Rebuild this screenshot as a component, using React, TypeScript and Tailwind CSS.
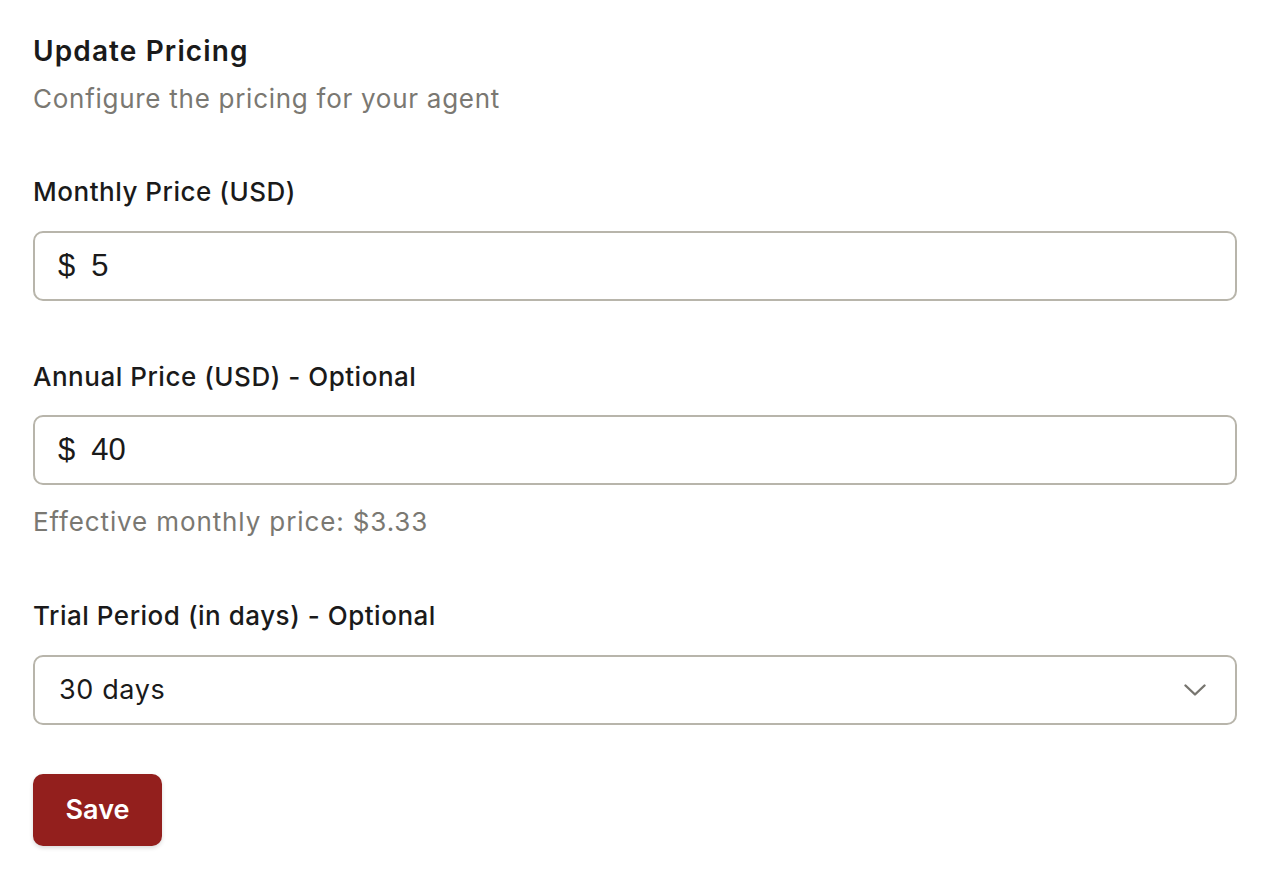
import React from "react";

const font = { fontFamily: "Inter, 'Noto Sans', sans-serif" };

function Chevron() {
  return (
    <svg width="22" height="12" viewBox="0 0 22 12" fill="none" stroke="#77756f" strokeWidth="2.4" strokeLinecap="round" strokeLinejoin="round">
      <path d="M1.5 1.5l9.5 9 9.5-9" />
    </svg>
  );
}

function PriceInput({ value }: { value: string }) {
  return (
    <div className="flex h-[70px] items-center rounded-[10px] border-2 border-[#b8b5ab] bg-white pl-[23px] font-['Liberation_Sans',Arial,sans-serif] text-[31px] text-[#1a1a1a]">
      <span>$</span>
      <span className="ml-[16px]">{value}</span>
    </div>
  );
}

export default function App() {
  return (
    <div className="min-h-[880px] bg-white pl-[33px] pr-[35px] pt-[33px] text-[#1a1a1a]" style={font}>
      <h1 className="text-[28px] font-semibold leading-[36px] tracking-[0.04em]">Update Pricing</h1>
      <p className="mt-[14px] text-[26px] leading-[32px] tracking-[0.028em] text-[#7a7872]">Configure the pricing for your agent</p>

      <div className="mt-[61px]">
        <label className="block text-[26px] font-medium leading-[32px] tracking-[0.02em]">Monthly Price (USD)</label>
        <div className="mt-[23px]">
          <PriceInput value="5" />
        </div>
      </div>

      <div className="mt-[60px]">
        <label className="block text-[26px] font-medium leading-[32px] tracking-[0.02em]">Annual Price (USD) - Optional</label>
        <div className="mt-[22px]">
          <PriceInput value="40" />
        </div>
        <p className="mt-[21px] text-[26px] leading-[32px] tracking-[0.034em] text-[#7a7872]">Effective monthly price: $3.33</p>
      </div>

      <div className="mt-[62px]">
        <label className="block text-[26px] font-medium leading-[32px] tracking-[0.02em]">Trial Period (in days) - Optional</label>
        <div className="mt-[23px] flex h-[70px] items-center justify-between rounded-[10px] border-2 border-[#b8b5ab] bg-white pl-[24px] pr-[29px]">
          <span className="text-[27px] tracking-[0.023em]">30 days</span>
          <Chevron />
        </div>
      </div>

      <button className="mt-[49px] flex h-[72px] w-[129px] items-center justify-center rounded-[10px] bg-[#931f1d] text-[27px] font-semibold text-white shadow-[0_2px_4px_rgba(0,0,0,0.15)]">
        Save
      </button>
    </div>
  );
}
